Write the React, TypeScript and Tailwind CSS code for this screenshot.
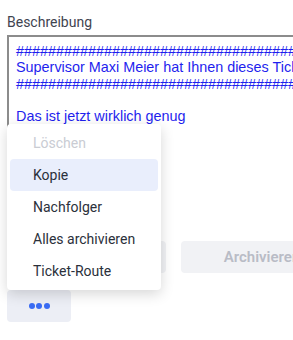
import React from "react";

const items = [
  { label: "Löschen", disabled: true },
  { label: "Kopie", active: true },
  { label: "Nachfolger" },
  { label: "Alles archivieren" },
  { label: "Ticket-Route" },
];

export default function App() {
  return (
    <div className="relative w-[293px] h-[340px] overflow-hidden bg-white font-['Roboto',sans-serif]">
      <div className="w-[460px] pl-[7px] pt-[12px]">
        <div className="text-[14px] leading-[20px] text-[#3f4450]">Beschreibung</div>
        <div className="mt-[3px] h-[190px] border-t-2 border-l-2 border-[#8c8c8c] pl-[7px] pt-[6px] font-['Liberation_Sans',Arial,sans-serif] text-[14.4px] leading-[16.3px] text-[#1f1fee] whitespace-pre">
          {"##########################################################\nSupervisor Maxi Meier hat Ihnen dieses Ticket zugewiesen\n##########################################################\n\nDas ist jetzt wirklich genug"}
        </div>
        <div className="flex gap-[15px] mt-[16px]">
          <button className="w-[159px] h-[32px] rounded bg-[#f1f2f5]" />
          <button className="w-[162px] h-[32px] rounded bg-[#f1f2f5] text-[15px] font-semibold text-[#b9bcc6]">
            Archivieren
          </button>
        </div>
        <button className="mt-[17px] w-[64px] h-[32px] rounded bg-[#eceef5] flex items-center justify-center gap-[1.5px]">
          <span className="w-[6px] h-[6px] rounded-full bg-[#3a6cf4]" />
          <span className="w-[6px] h-[6px] rounded-full bg-[#3a6cf4]" />
          <span className="w-[6px] h-[6px] rounded-full bg-[#3a6cf4]" />
        </button>
      </div>

      <div className="absolute left-[7px] top-[124px] w-[154px] rounded-[4px] bg-white p-[3px] shadow-[0_4px_14px_rgba(0,0,0,0.16)]">
        {items.map((it) => (
          <div
            key={it.label}
            className={
              "h-[32px] flex items-center pl-[23px] rounded-[4px] text-[14px] " +
              (it.active ? "bg-[#e9eefc] " : "") +
              (it.disabled ? "text-[#c9ccd3]" : "text-[#2b303b]")
            }
          >
            {it.label}
          </div>
        ))}
      </div>
    </div>
  );
}
